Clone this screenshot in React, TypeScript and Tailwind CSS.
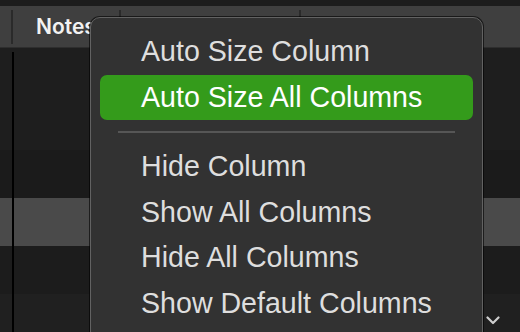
import React from 'react';

const rows = [
  { h: 'h-[54px]', bg: 'bg-[#1e1e1e]' },
  { h: 'h-[48px]', bg: 'bg-[#1e1e1e]' },
  { h: 'h-[48px]', bg: 'bg-[#1b1b1b]' },
  { h: 'h-[48px]', bg: 'bg-[#4a4a4a]' },
  { h: 'h-[48px]', bg: 'bg-[#1c1c1c]' },
  { h: 'h-[48px]', bg: 'bg-[#202020]' },
];

const topItems = ['Auto Size Column', 'Auto Size All Columns'];
const bottomItems = ['Hide Column', 'Show All Columns', 'Hide All Columns', 'Show Default Columns'];

const MenuItem: React.FC<{ label: string; active?: boolean }> = ({ label, active }) => (
  <div
    className={`flex h-[45.5px] items-center rounded-[7px] pl-[41px] text-[28.6px] leading-none ${
      active ? 'bg-[#349b1b] text-white' : 'text-[#dedede]'
    }`}
  >
    {label}
  </div>
);

const App: React.FC = () => {
  return (
    <div
      className="relative h-[332px] w-[520px] overflow-hidden bg-[#1e1e1e]"
      style={{ fontFamily: '"Liberation Sans", Arial, sans-serif' }}
    >
      <div className="h-[6px] bg-[#1c1c1c]" />
      <div className="flex h-[42px] items-center border-b border-[#2e2e2e] bg-[#3f3f3f]">
        <div className="h-[34px] w-[13px] border-r-2 border-[#2a2a2a]" />
        <div
          className="flex h-[34px] w-[108px] items-center border-r-2 border-[#2a2a2a] pl-[23px] text-[21px] font-semibold text-[#f2f2f2]"
          style={{ fontFamily: 'Inter, "Liberation Sans", sans-serif' }}
        >
          Notes
        </div>
        <div className="h-[34px] w-[180px] border-r-2 border-[#2a2a2a]" />
      </div>

      <div className="relative">
        {rows.map((r, i) => (
          <div key={i} className={`${r.h} ${r.bg}`} />
        ))}
        <div className="absolute left-[12px] top-[4px] bottom-0 w-[2px] bg-black" />
      </div>

      <svg
        className="absolute left-[486px] top-[316px]"
        width="14"
        height="9"
        viewBox="0 0 14 9"
        fill="none"
      >
        <path d="M1.5 1.5 L7 7 L12.5 1.5" stroke="#cfcfcf" strokeWidth="2.2" strokeLinecap="round" strokeLinejoin="round" />
      </svg>

      <div className="absolute left-[90px] top-[17px] w-[393px] h-[340px] rounded-[10px] border-[1.5px] border-[#626262] bg-[#323232] px-[9px] pt-[11px] shadow-[0_0_0_1px_rgba(0,0,0,0.6)]">
        {topItems.map((t, i) => (
          <MenuItem key={t} label={t} active={i === 1} />
        ))}
        <div className="flex h-[24px] items-center px-[18px]">
          <div className="h-[2px] w-full bg-[#565656]" />
        </div>
        {bottomItems.map(t => (
          <MenuItem key={t} label={t} />
        ))}
      </div>
    </div>
  );
};

export default App;
